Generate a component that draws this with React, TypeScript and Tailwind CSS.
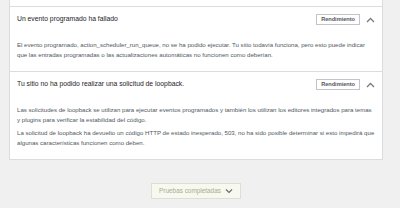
import React from 'react';

const font = "font-['Liberation_Sans','Arial',sans-serif]";

function ChevronUp() {
  return (
    <svg width="9" height="6" viewBox="0 0 9 6" className="text-[#787c82]">
      <path d="M1 5 L4.5 1.5 L8 5" fill="none" stroke="currentColor" strokeWidth="1.3" />
    </svg>
  );
}

function ChevronDown() {
  return (
    <svg width="8" height="6" viewBox="0 0 8 6" className="text-[#6d7163]">
      <path d="M1 1.5 L4 4.5 L7 1.5" fill="none" stroke="currentColor" strokeWidth="1.2" />
    </svg>
  );
}

type Issue = {
  title: string;
  // each paragraph split into its visual lines
  paragraphs: string[][];
};

const issues: Issue[] = [
  {
    title: 'Un evento programado ha fallado',
    paragraphs: [
      [
        'El evento programado, action_scheduler_run_queue, no se ha podido ejecutar. Tu sitio todavía funciona, pero esto puede indicar',
        'que las entradas programadas o las actualizaciones automáticas no funcionen como deberían.',
      ],
    ],
  },
  {
    title: 'Tu sitio no ha podido realizar una solicitud de loopback.',
    paragraphs: [
      [
        'Las solicitudes de loopback se utilizan para ejecutar eventos programados y también los utilizan los editores integrados para temas',
        'y plugins para verificar la estabilidad del código.',
      ],
      [
        'La solicitud de loopback ha devuelto un código HTTP de estado inesperado, 503, no ha sido posible determinar si esto impedirá que',
        'algunas características funcionen como deben.',
      ],
    ],
  },
];

function IssueItem({ issue }: { issue: Issue }) {
  return (
    <div className="border-t border-[#dcdcde]">
      <div className="flex items-center h-[25px] pl-[7px] pr-[7px]">
        <span className="flex-1 text-[6.8px] text-[#1d2327]">{issue.title}</span>
        <span className="border border-[#c3c4c7] px-[4px] h-[11px] flex items-center text-[5.6px] font-bold text-[#50575e]">
          Rendimiento
        </span>
        <span className="ml-[6px] flex items-center">
          <ChevronUp />
        </span>
      </div>
      <div className="pl-[7px] pr-[5px] pt-[8px] pb-[11px] space-y-[3px]">
        {issue.paragraphs.map((lines, i) => (
          <p key={i} className="text-[6.1px] leading-[10px] text-[#50575e]">
            {lines.map((line) => (
              <span key={line} className="block whitespace-nowrap">
                {line}
              </span>
            ))}
          </p>
        ))}
      </div>
    </div>
  );
}

export default function App() {
  return (
    <div className={`w-[400px] h-[208px] bg-[#f0f0f1] overflow-hidden ${font}`}>
      <div className="ml-[9px] w-[374px] bg-white border-x border-b border-[#dcdcde]">
        <div className="h-[6px]" />
        {issues.map((issue) => (
          <IssueItem key={issue.title} issue={issue} />
        ))}
      </div>
      <div className="ml-[9px] w-[374px] flex justify-center mt-[23px]">
        <button className="flex items-center gap-[4px] h-[16px] px-[7px] bg-[#f7f8f0] border border-[#dedfd0] text-[6.4px] text-[#a9ad8c]">
          Pruebas completadas
          <ChevronDown />
        </button>
      </div>
    </div>
  );
}
